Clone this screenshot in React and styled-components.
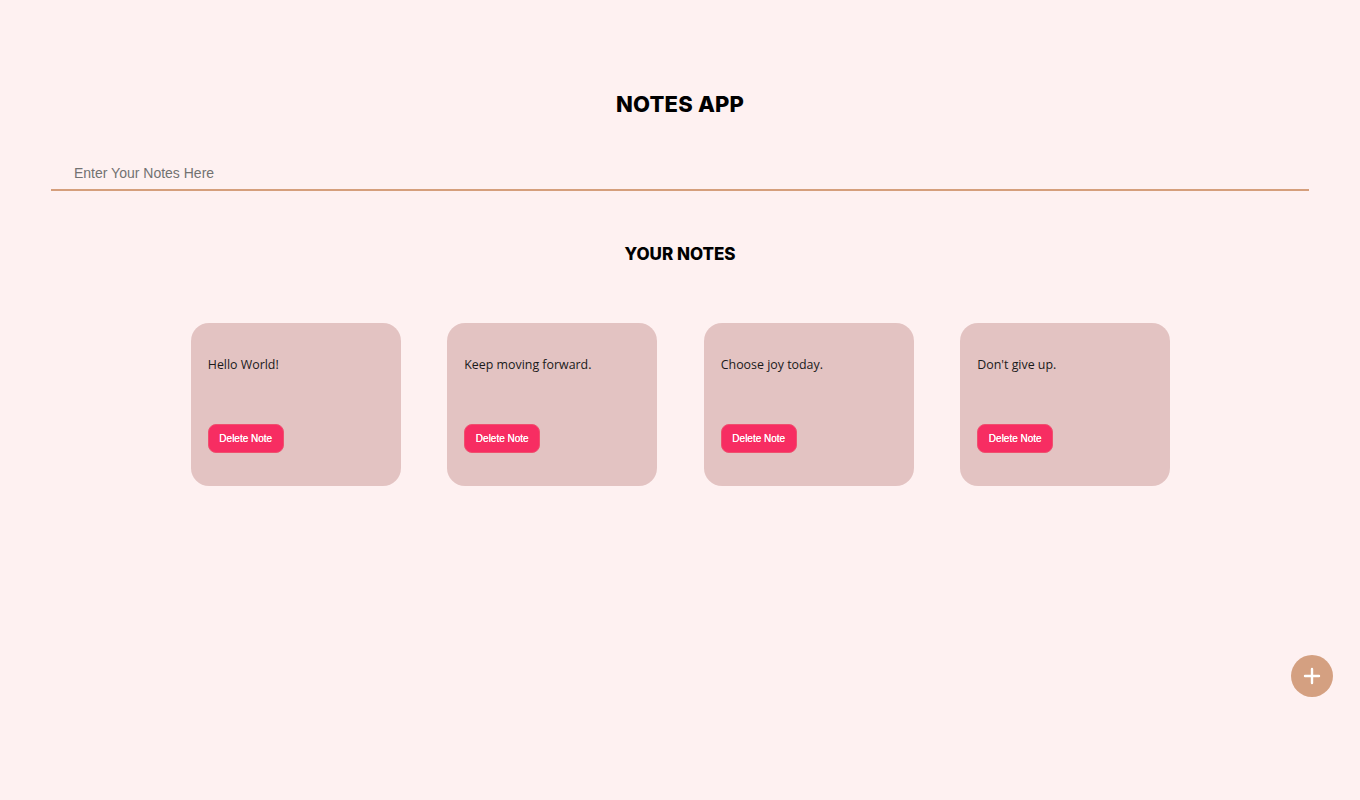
import React, { useState } from 'react';
import styled, { createGlobalStyle } from 'styled-components';

const GlobalStyle = createGlobalStyle`
  html, body {
    margin: 0;
    padding: 0;
    background: #fef1f1;
  }
  * { box-sizing: border-box; }
`;

const Page = styled.div`
  min-height: 800px;
  padding: 90px 51px 0;
  display: flex;
  flex-direction: column;
  align-items: center;
`;

const Title = styled.h1`
  margin: 0;
  font-family: 'Inter', 'Liberation Sans', sans-serif;
  font-weight: 800;
  font-size: 22px;
  line-height: 28px;
  letter-spacing: 0.2px;
  color: #000;
`;

const NoteInput = styled.input`
  margin-top: 38px;
  width: 100%;
  height: 35px;
  border: none;
  border-bottom: 2px solid #d59f7c;
  background: transparent;
  padding: 0 23px;
  font-family: 'Liberation Sans', Arial, sans-serif;
  font-size: 14px;
  color: #333;
  outline: none;

  &::placeholder {
    color: #727272;
  }
`;

const SubTitle = styled.h2`
  margin: 51px 0 0;
  font-family: 'Inter', 'Liberation Sans', sans-serif;
  font-weight: 800;
  font-size: 17px;
  line-height: 24px;
  color: #000;
`;

const NotesGrid = styled.div`
  margin-top: 57px;
  padding-left: 1px;
  display: flex;
  gap: 46.5px;
  justify-content: center;
`;

const Card = styled.div`
  width: 210px;
  height: 163px;
  background: #e3c3c2;
  border-radius: 18px;
  padding: 33px 17px 0;
  display: flex;
  flex-direction: column;
  align-items: flex-start;
`;

const NoteText = styled.p`
  margin: 0;
  font-family: 'Open Sans', sans-serif;
  font-size: 12.4px;
  line-height: 18px;
  color: #1a1a1a;
`;

const DeleteButton = styled.button`
  margin-top: 50px;
  width: 76px;
  height: 29px;
  border: 1px solid #f0506e;
  border-radius: 8px;
  background: #f72d62;
  color: #fff;
  font-family: 'Liberation Sans', Arial, sans-serif;
  font-size: 10px;
  text-shadow: 0 0 0.4px #fff;
  cursor: pointer;
`;

const Fab = styled.button`
  position: fixed;
  right: 27px;
  bottom: 103px;
  width: 42px;
  height: 42px;
  border-radius: 50%;
  border: none;
  background: #d4a081;
  display: flex;
  align-items: center;
  justify-content: center;
  cursor: pointer;
  padding: 0;
`;

const initialNotes = [
  'Hello World!',
  'Keep moving forward.',
  'Choose joy today.',
  "Don't give up.",
];

export default function App() {
  const [notes, setNotes] = useState(initialNotes);
  const [text, setText] = useState('');

  const addNote = () => {
    if (!text.trim()) return;
    setNotes([...notes, text.trim()]);
    setText('');
  };

  return (
    <>
      <GlobalStyle />
      <Page>
        <Title>NOTES APP</Title>
        <NoteInput
          placeholder="Enter Your Notes Here"
          value={text}
          onChange={(e) => setText(e.target.value)}
        />
        <SubTitle>YOUR NOTES</SubTitle>
        <NotesGrid>
          {notes.map((n, i) => (
            <Card key={i}>
              <NoteText>{n}</NoteText>
              <DeleteButton onClick={() => setNotes(notes.filter((_, j) => j !== i))}>
                Delete Note
              </DeleteButton>
            </Card>
          ))}
        </NotesGrid>
      </Page>
      <Fab onClick={addNote} aria-label="Add note">
        <svg width="18" height="18" viewBox="0 0 18 18">
          <path d="M9 2v14M2 9h14" stroke="#fff" strokeWidth="2.4" strokeLinecap="round" />
        </svg>
      </Fab>
    </>
  );
}
